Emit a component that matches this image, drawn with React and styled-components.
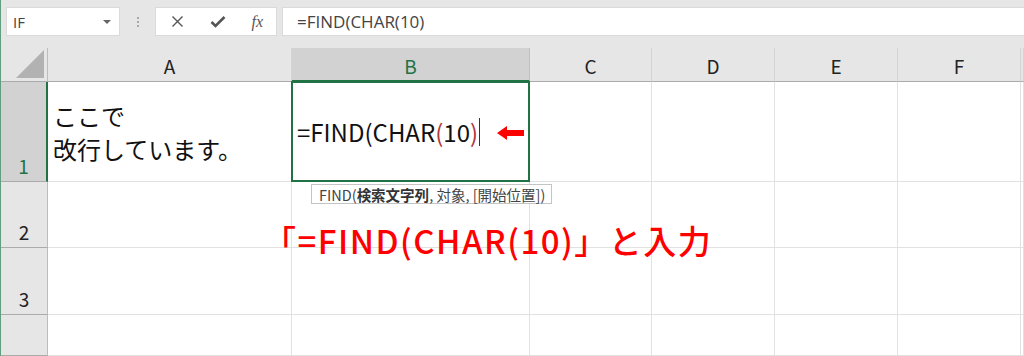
import React from "react";
import styled, { createGlobalStyle } from "styled-components";

const GlobalStyle = createGlobalStyle`
html, body {
  margin:0;
  padding:0;
  background:#ffffff;
  overflow:hidden;
}
body {
  font-family:"Noto Sans CJK JP", "Noto Sans", sans-serif;
}
`;

const GREEN = "#217346";

const Page = styled.div`
width:1024px;
height:356px;
display:flex;
flex-direction:column;
border-left:1px solid #5f9f7f;
box-sizing:border-box;
overflow:hidden;
`;

// formula bar
const Toolbar = styled.div`
display:flex;
align-items:center;
height:48px;
padding:7px 0 12px 5px;
box-sizing:border-box;
background:#e6e6e6;
`;

const NameBox = styled.div`
width:114px;
height:29px;
box-sizing:border-box;
background:#fff;
border:1px solid #dadada;
display:flex;
align-items:center;
justify-content:space-between;
padding:0 8px 0 6px;
font-family:"Open Sans", "Noto Sans", sans-serif;
font-size:15px;
color:#444;
`;

const DropArrow = styled.span`
width:0;
height:0;
border-left:4px solid transparent;
border-right:4px solid transparent;
border-top:4px solid #666;
`;

const Dots = styled.div`
width:35px;
display:flex;
flex-direction:column;
align-items:center;
gap:2px;
span{
  width:2px;
  height:2px;
  background:#a8a8a8;
}
`;

const FuncBox = styled.div`
width:122px;
height:29px;
box-sizing:border-box;
background:#fff;
border:1px solid #dadada;
display:flex;
align-items:center;
justify-content:space-between;
padding:0 13px 0 15px;
color:#555;
`;

const Fx = styled.span`
font-family:"Liberation Serif", serif;
font-style:italic;
font-size:16px;
color:#555;
`;

const FormulaInput = styled.div`
flex:1;
margin-left:5px;
height:29px;
box-sizing:border-box;
background:#fff;
border:1px solid #dadada;
border-right:none;
display:flex;
align-items:center;
padding-left:14px;
font-family:"Open Sans", "Noto Sans", sans-serif;
font-size:17px;
color:#444;
`;

// sheet
const Sheet = styled.div`
position:relative;
flex:1;
display:grid;
grid-template-columns:47px 244px 238px 122px 123px 123px 123px 1fr;
grid-template-rows:34px 100px 66px 67px 1fr;
`;

const Corner = styled.div`
background:#e6e6e6;
border-right:1px solid #bdbdbd;
border-bottom:1px solid #ababab;
position:relative;
&::after{
  content:"";
  position:absolute;
  right:3px;
  bottom:3px;
  border-left:28px solid transparent;
  border-bottom:28px solid #b2b2b2;
}
`;

const ColHeader = styled.div`
background:${p => (p.$active ? "#d2d2d2" : "#e6e6e6")};
color:${p => (p.$active ? GREEN : "#222")};
border-right:1px solid ${p => (p.$active ? "#c0c0c0" : "#d4d4d4")};
border-bottom:${p => (p.$active ? `2px solid ${GREEN}` : "1px solid #ababab")};
display:flex;
align-items:center;
justify-content:center;
padding-top:2px;
font-size:19px;
`;

const RowHeader = styled.div`
background:${p => (p.$active ? "#d2d2d2" : "#e6e6e6")};
color:${p => (p.$active ? GREEN : "#222")};
border-right:${p => (p.$active ? `2px solid ${GREEN}` : "1px solid #bdbdbd")};
border-bottom:1px solid #ababab;
display:flex;
align-items:flex-end;
justify-content:center;
padding-bottom:2px;
font-size:19px;
`;

const Cell = styled.div`
border-right:1px solid #e1e1e1;
border-bottom:1px solid #e1e1e1;
`;

const WrapCell = styled(Cell)`
display:flex;
flex-direction:column;
justify-content:center;
padding:0 0 0 5px;
font-size:24px;
line-height:33px;
color:#111;
`;

const ActiveCell = styled.div`
border:2px solid ${GREEN};
margin:-1px 0 0 -1px;
display:flex;
align-items:center;
padding-left:4px;
font-size:24px;
color:#111;
z-index:1;
`;

const Paren = styled.span`
color:#b0383a;
`;

const Caret = styled.span`
display:inline-block;
flex-shrink:0;
width:1px;
height:28px;
background:#333;
margin-left:1px;
`;

const Arrow = styled.svg`
flex-shrink:0;
margin-left:17px;
margin-top:2px;
`;

const Tooltip = styled.div`
position:absolute;
left:310px;
top:136px;
height:20px;
box-sizing:border-box;
display:flex;
align-items:center;
padding:0 6px 0 7px;
background:#fff;
border:1px solid #c4c4c4;
font-size:14.5px;
color:#444;
z-index:2;
white-space:nowrap;
b{
  font-weight:700;
  color:#333;
}
`;

const Annotation = styled.div`
position:absolute;
left:262px;
top:176px;
font-size:33px;
line-height:1;
font-weight:500;
color:#ff0000;
letter-spacing:1.5px;
white-space:nowrap;
z-index:2;
`;

const columns = ["A", "B", "C", "D", "E", "F", ""];

const App = () => {
  const rows = [2, 3, ""];

  return (
    <Page>
      <GlobalStyle />
      {/* formula bar */}
      <Toolbar>
        <NameBox>
          IF
          <DropArrow />
        </NameBox>
        <Dots>
          <span />
          <span />
          <span />
        </Dots>
        <FuncBox>
          <svg width="13" height="13" viewBox="0 0 13 13">
            <path d="M1.5 1.5L11.5 11.5M11.5 1.5L1.5 11.5" stroke="#555" strokeWidth="1.4" fill="none" />
          </svg>
          <svg width="16" height="13" viewBox="0 0 16 13">
            <path d="M1.5 7L5.5 11L14.5 2" stroke="#555" strokeWidth="2.6" fill="none" />
          </svg>
          <Fx>fx</Fx>
        </FuncBox>
        <FormulaInput>=FIND(CHAR(10)</FormulaInput>
      </Toolbar>

      {/* grid */}
      <Sheet>
        <Corner />
        {columns.map((c, i) => (
          <ColHeader key={i} $active={c === "B"}>{c}</ColHeader>
        ))}

        <RowHeader $active>1</RowHeader>
        <WrapCell>
          <div>ここで</div>
          <div>改行しています。</div>
        </WrapCell>
        <ActiveCell>
          =FIND(CHAR<Paren>(</Paren>10<Paren>)</Paren>
          <Caret />
          <Arrow width="27" height="14" viewBox="0 0 27 14">
            <path d="M0 7L10 0V4H27V10H10V14Z" fill="#ff0000" />
          </Arrow>
        </ActiveCell>
        {columns.slice(2).map((c, i) => (
          <Cell key={i} />
        ))}

        {rows.map(r => (
          <React.Fragment key={r}>
            <RowHeader>{r}</RowHeader>
            {columns.map((c, i) => (
              <Cell key={i} />
            ))}
          </React.Fragment>
        ))}

        <Tooltip>
          FIND(<b>検索文字列</b>, 対象, [開始位置])
        </Tooltip>
        <Annotation>「=FIND(CHAR(10)」と入力</Annotation>
      </Sheet>
    </Page>
  );
};

export default App;
